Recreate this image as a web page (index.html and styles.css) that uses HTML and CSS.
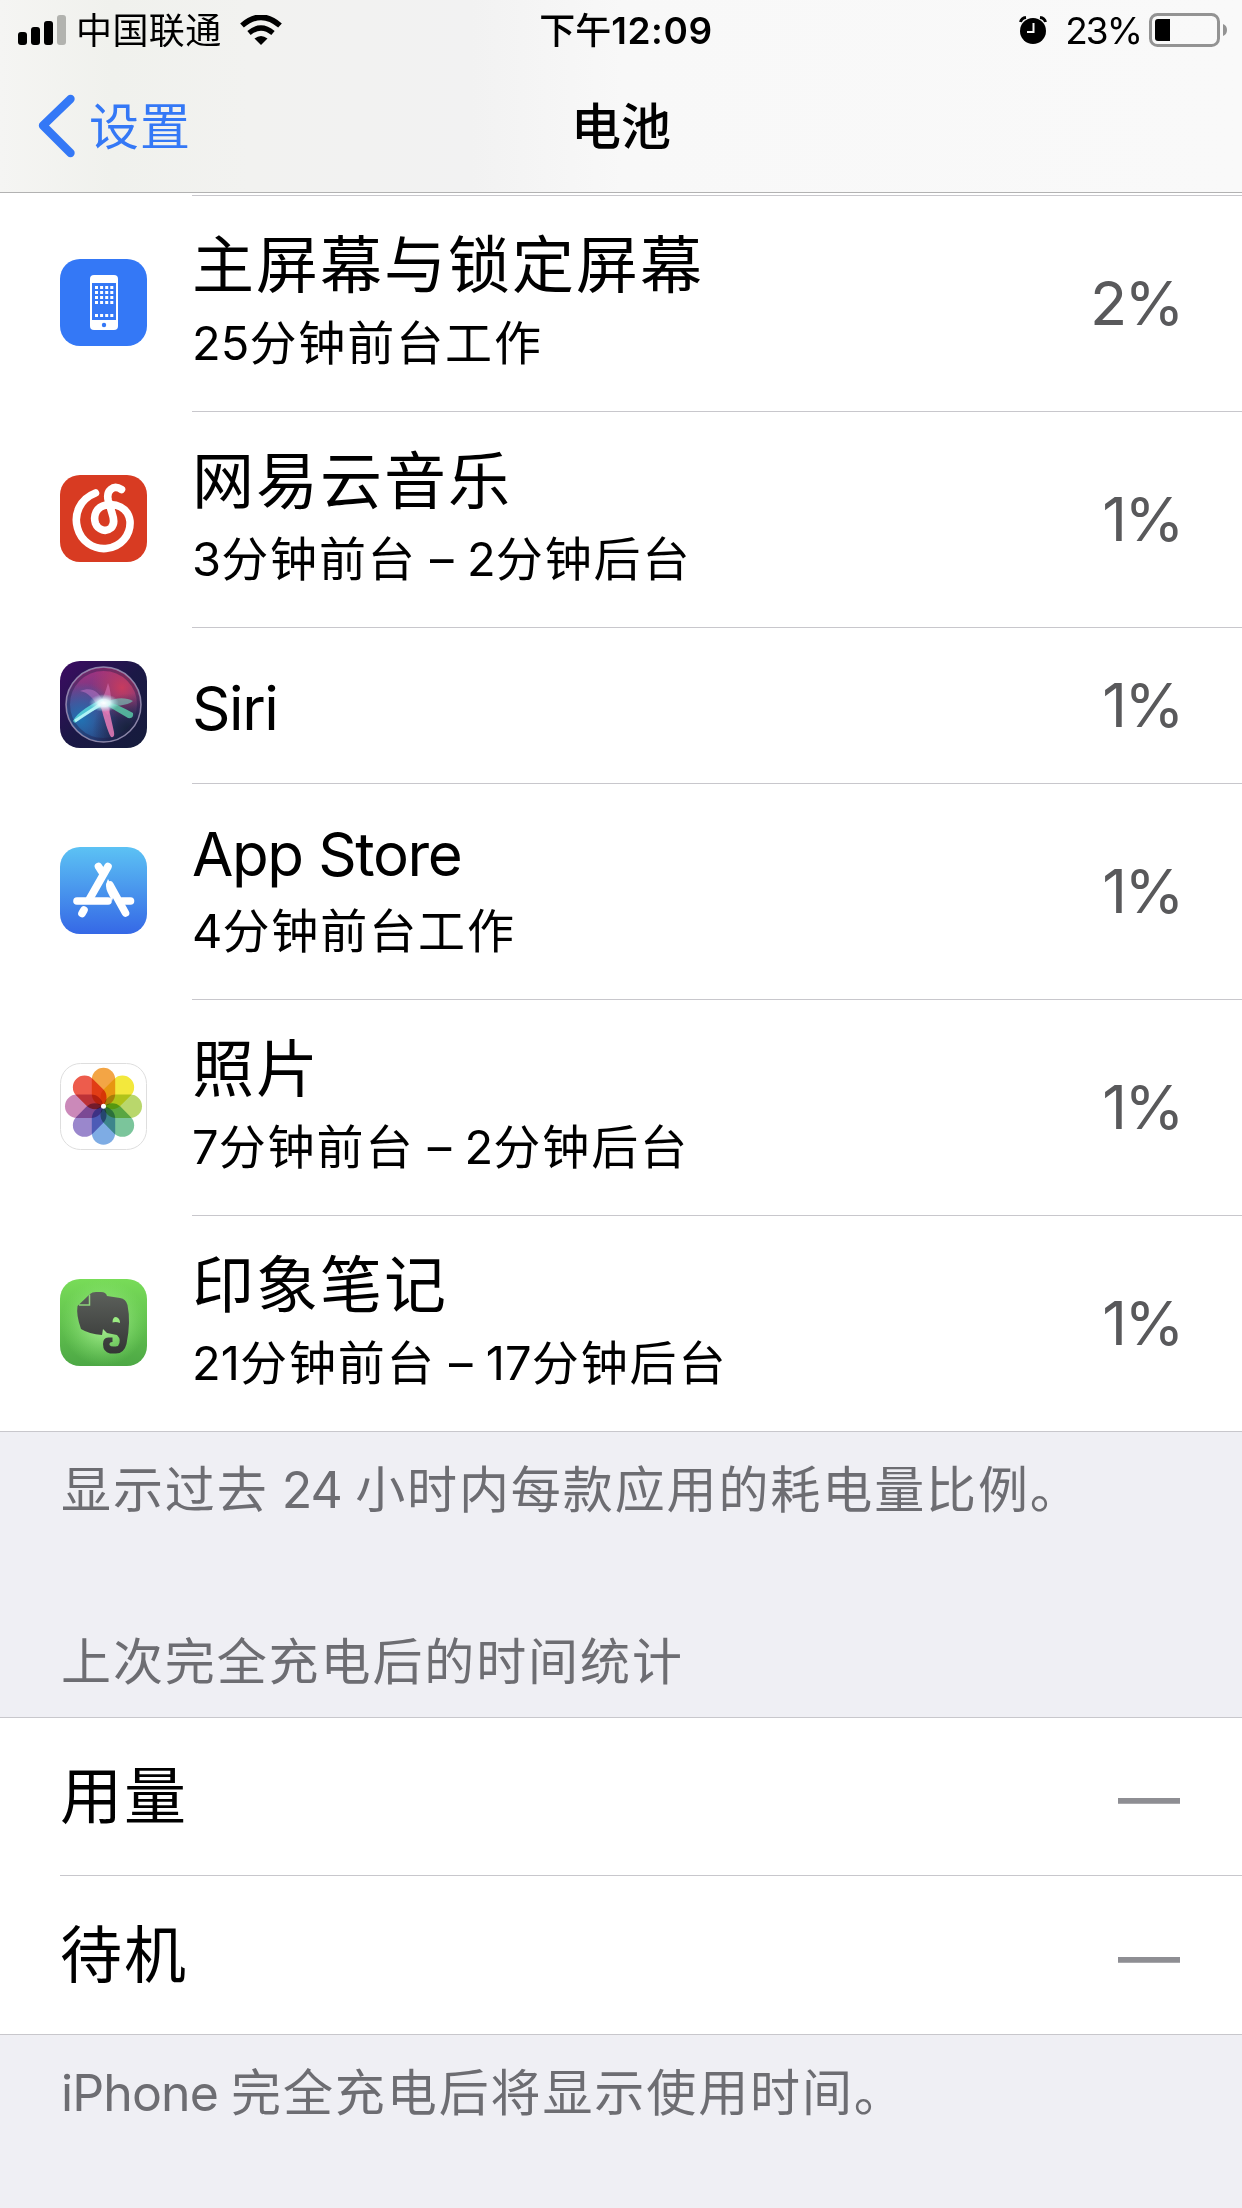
FILE: index.html
```html
<!DOCTYPE html>
<html lang="zh-CN">
<head>
  <meta charset="UTF-8" />
  <meta name="viewport" content="width=device-width, initial-scale=1.0" />
  <title>电池</title>
  <link rel="stylesheet" href="styles.css">
</head>
<body>

  <header class="header">
    <div class="status-bar">
      <div class="status-left">
        <svg class="signal" width="48" height="30" viewBox="0 0 48 30">
          <rect x="0" y="17" width="9" height="13" rx="3" />
          <rect x="13" y="12" width="9" height="18" rx="3" />
          <rect x="26" y="6" width="9" height="24" rx="3" />
          <rect x="39" y="0" width="9" height="30" rx="3" fill="#b2b3af" />
        </svg>
        <span class="carrier">中国联通</span>
        <svg class="wifi" width="42" height="30" viewBox="0 0 42 30">
          <path d="M2 10.500Q21 -6 40 10.500" fill="none" stroke="#000" stroke-width="5.600" />
          <path d="M9 18Q21 8 33 18" fill="none" stroke="#000" stroke-width="5.200" />
          <path d="M14.500 23.500Q21 18.500 27.500 23.500L21 30Z" />
        </svg>
      </div>
      <div class="time">下午<span class="latin">12:09</span></div>
      <div class="status-right">
        <svg class="alarm" width="28" height="28" viewBox="0 0 28 28">
          <circle cx="14" cy="15" r="13" />
          <path d="M1.500 6Q2.500 2 7 1.500M26.500 6Q25.500 2 21 1.500" fill="none" stroke="#000" stroke-width="3" />
          <path d="M14.500 7V16H8" fill="none" stroke="#f8f8f8" stroke-width="2" />
        </svg>
        <span class="percent">23%</span>
        <svg class="battery" width="79" height="34" viewBox="0 0 79 34">
          <rect x="1.500" y="1.500" width="68" height="31" rx="7" fill="none" stroke="#939393" stroke-width="3" />
          <path d="M6 9Q6 6 9 6H21V28H9Q6 28 6 25Z" />
          <path d="M74 11Q78 12.500 78 17T74 23Z" fill="#939393" />
        </svg>
      </div>
    </div>
    <nav class="nav-bar">
      <a class="back" href="#">
        <svg width="37" height="64" viewBox="0 0 37 64">
          <path d="M32.500 5L5 31.500L32.500 59" fill="none" stroke="#3478f6" stroke-width="8.400" stroke-linecap="round" stroke-linejoin="round" />
        </svg>
        <span>设置</span>
      </a>
      <h1>电池</h1>
      <div></div>
    </nav>
  </header>

  <main>
    <ul class="apps">
      <li class="app">
        <svg class="icon" viewBox="0 0 87 87">
          <rect width="87" height="87" rx="20" fill="#3478f6" />
          <rect x="30" y="16" width="28" height="55" rx="4" fill="#fff" />
          <rect x="32" y="24" width="24" height="37" fill="#3478f6" />
          <path d="M35 28.500H54M35 33.500H54M35 38.500H54M35 43.500H54M35 56.500H54" stroke="#fff" stroke-width="3" stroke-dasharray="3 2.100" />
          <circle cx="44" cy="66" r="2.200" fill="#3478f6" />
        </svg>
        <div class="info">
          <div class="info-text">
            <h2>主屏幕与锁定屏幕</h2>
            <p><span class="latin">25</span>分钟前台工作</p>
          </div>
          <span class="usage">2%</span>
        </div>
      </li>

      <li class="app">
        <svg class="icon" viewBox="0 0 87 87">
          <rect width="87" height="87" rx="20" fill="#d83b22" />
          <path d="M35.500 18C20 24 13.500 39 17.500 53C21 66 33 74.500 46 73.500C61 72 71 60 70 46C68 32 55 28 46 30C36 32 33 41 35.500 48.500C38 55 46 57.500 51 53C55 49 54 44 52 38L48.200 25C46 16 53 9 61.500 14.500" fill="none" stroke="#fff" stroke-width="7.600" stroke-linecap="round" />
        </svg>
        <div class="info">
          <div class="info-text">
            <h2>网易云音乐</h2>
            <p><span class="latin">3</span>分钟前台<span class="latin"> – 2</span>分钟后台</p>
          </div>
          <span class="usage">1%</span>
        </div>
      </li>

      <li class="app single">
        <svg class="icon" viewBox="0 0 87 87">
          <defs>
            <linearGradient id="siriBg" x1="0" y1="0" x2="1" y2="1">
              <stop offset="0" stop-color="#3d0b63" />
              <stop offset=".5" stop-color="#1b1846" />
              <stop offset="1" stop-color="#151c3b" />
            </linearGradient>
            <linearGradient id="siriOrb" x1=".35" y1="0" x2=".5" y2="1">
              <stop offset="0" stop-color="#a5327f" />
              <stop offset=".45" stop-color="#603b86" />
              <stop offset="1" stop-color="#26336b" />
            </linearGradient>
            <radialGradient id="siriRed" cx=".75" cy=".27" r=".42">
              <stop offset="0" stop-color="#c83b5e" />
              <stop offset="1" stop-color="#c83b5e" stop-opacity="0" />
            </radialGradient>
            <radialGradient id="siriBlue" cx=".2" cy=".7" r=".5">
              <stop offset="0" stop-color="#2173b4" />
              <stop offset="1" stop-color="#2173b4" stop-opacity="0" />
            </radialGradient>
            <radialGradient id="siriDark" cx=".85" cy=".85" r=".5">
              <stop offset="0" stop-color="#152139" />
              <stop offset="1" stop-color="#152139" stop-opacity="0" />
            </radialGradient>
            <radialGradient id="siriGlow">
              <stop offset="0" stop-color="#fff" />
              <stop offset=".4" stop-color="#e6fcff" stop-opacity=".9" />
              <stop offset="1" stop-color="#9be8f0" stop-opacity="0" />
            </radialGradient>
          </defs>
          <rect width="87" height="87" rx="20" fill="url(#siriBg)" />
          <circle cx="43.500" cy="43.500" r="37" fill="url(#siriOrb)" />
          <circle cx="43.500" cy="43.500" r="37" fill="url(#siriRed)" />
          <circle cx="43.500" cy="43.500" r="37" fill="url(#siriBlue)" />
          <circle cx="43.500" cy="43.500" r="37" fill="url(#siriDark)" />
          <circle cx="43.500" cy="43.500" r="35" fill="none" stroke="#201b48" stroke-width="3" opacity=".4" />
          <circle cx="43.500" cy="43.500" r="37.500" fill="none" stroke="#a79fc0" stroke-width="1.500" opacity=".8" />
          <path d="M44 42C38 28 30 26 20 30C28 31 34 38 38 46Z" fill="#bd73c5" opacity=".55" />
          <path d="M38 44C42 40 46 30 48 22C52 32 52 48 48 54Z" fill="#d874b6" opacity=".6" />
          <path d="M44 42C55 36 66 36 73 40C67 45 55 45 45 46Z" fill="#76c4b9" opacity=".65" />
          <path d="M13 60C17 51 32 43 42 38L48 44C36 47 26 53 15 62Z" fill="#59d8dc" opacity=".85" />
          <path d="M15 60L44 41" stroke="#c8ffff" stroke-width="3" opacity=".8" />
          <path d="M45 40C54 42 66 48 73 52Q74 58 68 57L46 44Z" fill="#58c8a7" opacity=".85" />
          <path d="M40 42C43 54 48 72 51 76Q55 77 54 71L48 44Z" fill="#ea7cb8" opacity=".85" />
          <ellipse cx="44" cy="42" rx="15" ry="9" fill="url(#siriGlow)" />
        </svg>
        <div class="info">
          <div class="info-text">
            <h2><span class="latin">Siri</span></h2>
          </div>
          <span class="usage">1%</span>
        </div>
      </li>

      <li class="app">
        <svg class="icon" viewBox="0 0 87 87">
          <defs>
            <linearGradient id="storeBg" x1="0" y1="0" x2="0" y2="1">
              <stop offset="0" stop-color="#5cc2f4" />
              <stop offset="1" stop-color="#3568e6" />
            </linearGradient>
          </defs>
          <rect width="87" height="87" rx="20" fill="url(#storeBg)" />
          <g fill="none" stroke="#fff" stroke-width="7.600" stroke-linecap="round">
            <path d="M48 19.500L29.500 52" />
            <path d="M38.500 19.500L42 25" />
            <path d="M17 54H48" />
            <path d="M62 54H70.500" />
            <path d="M50 38L65.500 66" />
            <path d="M24 63L22 66.500" />
          </g>
          <path d="M48 32Q44.500 39 47.500 45L52 54L55 45Z" fill="#fff" />
        </svg>
        <div class="info">
          <div class="info-text">
            <h2><span class="latin">App Store</span></h2>
            <p><span class="latin">4</span>分钟前台工作</p>
          </div>
          <span class="usage">1%</span>
        </div>
      </li>

      <li class="app">
        <svg class="icon" viewBox="0 0 87 87">
          <rect x=".5" y=".5" width="86" height="86" rx="20" fill="#fff" stroke="#dedede" />
          <g class="petals" transform="translate(43.500 43.200)">
            <rect x="-11.700" y="-38.500" width="23.400" height="38" rx="11.700" fill="#f3a545" />
            <rect x="-11.700" y="-38.500" width="23.400" height="38" rx="11.700" fill="#f3e83c" transform="rotate(45)" />
            <rect x="-11.700" y="-38.500" width="23.400" height="38" rx="11.700" fill="#b9d76c" transform="rotate(90)" />
            <rect x="-11.700" y="-38.500" width="23.400" height="38" rx="11.700" fill="#7bc59b" transform="rotate(135)" />
            <rect x="-11.700" y="-38.500" width="23.400" height="38" rx="11.700" fill="#7eace4" transform="rotate(180)" />
            <rect x="-11.700" y="-38.500" width="23.400" height="38" rx="11.700" fill="#9a87cc" transform="rotate(225)" />
            <rect x="-11.700" y="-38.500" width="23.400" height="38" rx="11.700" fill="#cb89b9" transform="rotate(270)" />
            <rect x="-11.700" y="-38.500" width="23.400" height="38" rx="11.700" fill="#ed5c4c" transform="rotate(315)" />
          </g>
          <circle cx="43.500" cy="43.200" r="2.500" fill="#fff" />
        </svg>
        <div class="info">
          <div class="info-text">
            <h2>照片</h2>
            <p><span class="latin">7</span>分钟前台<span class="latin"> – 2</span>分钟后台</p>
          </div>
          <span class="usage">1%</span>
        </div>
      </li>

      <li class="app">
        <svg class="icon" viewBox="0 0 87 87">
          <defs>
            <linearGradient id="noteBg" x1="0" y1="0" x2="0" y2="1">
              <stop offset="0" stop-color="#78dc58" />
              <stop offset="1" stop-color="#4da845" />
            </linearGradient>
            <radialGradient id="noteGlow">
              <stop offset="0" stop-color="#b5f5a0" />
              <stop offset="1" stop-color="#8ae673" stop-opacity="0" />
            </radialGradient>
            <linearGradient id="elephant" x1="0" y1="0" x2="0" y2="1">
              <stop offset="0" stop-color="#5c605b" />
              <stop offset="1" stop-color="#343635" />
            </linearGradient>
          </defs>
          <rect width="87" height="87" rx="20" fill="url(#noteBg)" />
          <circle cx="43.500" cy="43.500" r="43" fill="url(#noteGlow)" />
          <path d="M17.500 27L30 15Q32 13 36 13H41Q46 13 47 17L60 19Q66 20 67.500 26Q71 43 66.500 65Q64 75 55 74.500H50Q43 73 43 65Q43 58 49 58.500H52.500V63Q49 63 49.500 66Q51 68.500 58 67Q62 61 57 56L47 54L43 50L42 56Q29 55 21 50Q16 36 17.500 27Z" fill="url(#elephant)" />
          <path d="M19 26H29.500V15.500" fill="none" stroke="#8fd37c" stroke-width="1.500" />
          <path d="M52.500 43.500Q52.500 38 56 38Q60 39 60 44Q56 42.500 52.500 43.500Z" fill="#9bed82" />
        </svg>
        <div class="info">
          <div class="info-text">
            <h2>印象笔记</h2>
            <p><span class="latin">21</span>分钟前台<span class="latin"> – 17</span>分钟后台</p>
          </div>
          <span class="usage">1%</span>
        </div>
      </li>
    </ul>

    <p class="note">显示过去<span class="latin"> 24 </span>小时内每款应用的耗电量比例。</p>
    <p class="note section-title">上次完全充电后的时间统计</p>

    <ul class="stats">
      <li><h2>用量</h2><span class="dash">—</span></li>
      <li><h2>待机</h2><span class="dash">—</span></li>
    </ul>

    <p class="note"><span class="latin">iPhone </span>完全充电后将显示使用时间。</p>
  </main>

</body>
</html>
```
FILE: styles.css
```css
* {
  margin: 0;
  padding: 0;
  box-sizing: border-box;
}

body {
  width: 1242px;
  height: 2208px;
  overflow: hidden;
  background: #efeff4;
  color: #000;
  font-family: Inter, "Noto Sans CJK SC", sans-serif;
}

ul {
  list-style: none;
}

svg {
  display: block;
  flex-shrink: 0;
}

/* header */
.header {
  height: 193px;
  border-bottom: 1px solid #b2b2b2;
  background: linear-gradient(90deg, #f5f5f3 0%, #f0f1ed 9%, #f2f2f0 20%, #f2f2f2 38%, #f8f8f8 50%, #f9f9f9 100%);
}

.status-bar {
  display: grid;
  grid-template-columns: 1fr auto 1fr;
  height: 60px;
  padding: 0 14px 0 18px;
  font-size: 36px;
  line-height: 62px;
}

.status-left, .status-right {
  display: flex;
  align-items: center;
  height: 60px;
}

.status-right {
  justify-content: flex-end;
}

.carrier {
  padding-top: 1px;
  margin-left: 10px;
  letter-spacing: 0.4px;
}

.wifi {
  margin-left: 18px;
}

.time {
  padding-left: 6px;
  font-weight: 500;
}

.time .latin {
  font-size: 37px;
  font-weight: 600;
  letter-spacing: 0.6px;
}

.percent {
  padding-top: 1px;
  margin: 0 8px 0 18px;
  font-size: 37px;
  letter-spacing: -2px;
}

.nav-bar {
  display: grid;
  grid-template-columns: 1fr auto 1fr;
  align-items: center;
  height: 132px;
  padding: 0 38px;
  font-size: 50px;
}

.back {
  display: flex;
  align-items: center;
  gap: 14px;
  color: #3478f6;
  text-decoration: none;
  letter-spacing: 1px;
}

.back span, .nav-bar h1 {
  padding-bottom: 7px;
}

.nav-bar h1 {
  font-size: 50px;
  font-weight: 500;
}

h2 {
  font-size: 62px;
  font-weight: 400;
  line-height: 84px;
  letter-spacing: 2px;
}

.latin {
  letter-spacing: 0;
  white-space: pre;
}

h2 .latin {
  font-size: 60px;
  letter-spacing: -1.400px;
}

/* app list */
.apps {
  padding-top: 2px;
  border-bottom: 1px solid #c8c7cc;
  background: #fff;
}

.app {
  display: flex;
  align-items: center;
  height: 216px;
  padding-left: 60px;
}

.app.single {
  height: 156px;
}

.single h2 {
  padding-top: 6px;
}

.icon {
  width: 87px;
  height: 87px;
  margin-bottom: 2px;
}

.petals rect {
  mix-blend-mode: multiply;
}

.info {
  display: flex;
  flex: 1;
  justify-content: space-between;
  align-items: center;
  height: 100%;
  margin-left: 45px;
  padding: 0 62px 2px 0;
  border-top: 1px solid #c8c7cc;
}

.info-text p {
  margin-top: -4px;
  font-size: 47px;
  line-height: 78px;
  letter-spacing: 1.900px;
}

.info-text p .latin {
  letter-spacing: 0.100px;
}

.usage {
  margin-right: -2px;
  color: #59595b;
  font-size: 61px;
  letter-spacing: -2.500px;
}

/* grey notes */
.note {
  height: 114px;
  padding: 23px 61px 0;
  color: #6d6d72;
  font-size: 50px;
  line-height: 70px;
  letter-spacing: 1.900px;
}

.note .latin {
  letter-spacing: -0.900px;
}

.section-title {
  height: 171px;
  padding-top: 81px;
}

.stats {
  border: solid #c8c7cc;
  border-width: 1px 0;
  background: #fff;
}

.stats li {
  display: flex;
  justify-content: space-between;
  align-items: center;
  height: 157px;
  margin-left: 60px;
  padding-right: 62px;
}

.stats li + li {
  height: 159px;
  padding-top: 1px;
  border-top: 1px solid #c8c7cc;
}

.dash {
  padding-top: 2px;
  color: #8e8e93;
  font-size: 62px;
  font-weight: 500;
}
```
